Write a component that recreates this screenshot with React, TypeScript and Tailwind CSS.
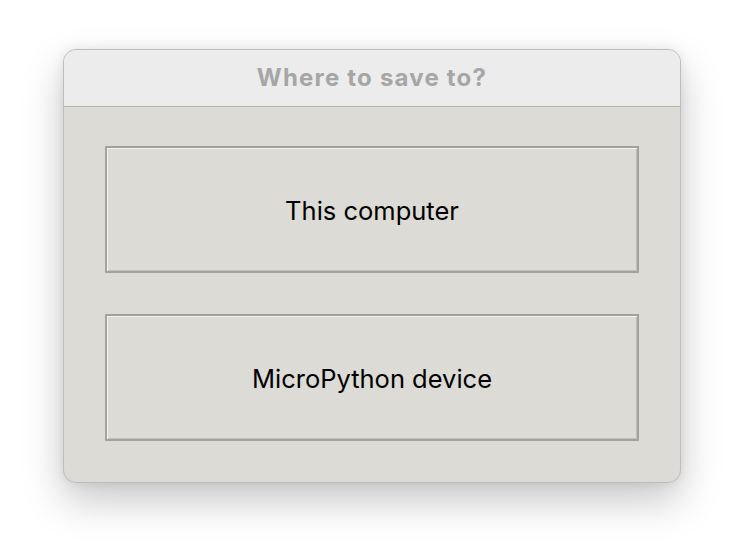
import React from "react";

function Btn({ label }: { label: string }) {
  return (
    <div className="h-[127px] w-full flex items-center justify-center bg-[#dcdbd6] border-2 border-[#a3a29c] shadow-[inset_1px_1px_0_#f3f2ee,inset_-1px_-1px_0_#c2c1bb]">
      <span className="text-[25.5px] text-black leading-none pt-[2px]">{label}</span>
    </div>
  );
}

export default function App() {
  return (
    <div className="w-[746px] h-[550px] bg-white pt-[49px] pl-[63px]" style={{ fontFamily: "Inter, 'Liberation Sans', sans-serif" }}>
      <div className="w-[618px] h-[434px] rounded-[13px] border border-[#bdbdbd] overflow-hidden flex flex-col bg-[#dcdbd6] shadow-[0_18px_40px_rgba(0,0,0,0.22),0_0_12px_rgba(0,0,0,0.08)]">
        <div className="h-[57px] shrink-0 bg-[#ececec] border-b border-[#b6b5af] flex items-center justify-center">
          <span className="text-[24px] font-bold text-[#a6a6a6] leading-none tracking-[1.2px]">Where to save to?</span>
        </div>
        <div className="flex-1 flex flex-col gap-[41px] pt-[39px] pl-[41px] pr-[41px]">
          <Btn label="This computer" />
          <Btn label="MicroPython device" />
        </div>
      </div>
    </div>
  );
}
